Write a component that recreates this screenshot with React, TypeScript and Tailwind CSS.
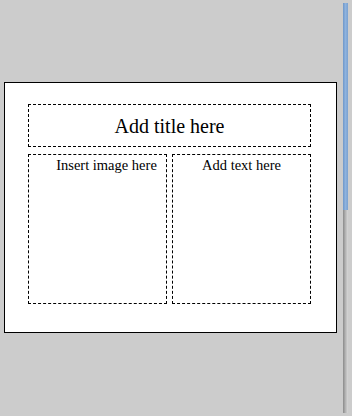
import React from 'react';

const serif = { fontFamily: '"Liberation Serif", "Times New Roman", serif' };

function Placeholder({ label, className }: { label: string; className: string }) {
  return (
    <div className={`border border-dashed border-black ${className}`}>
      <span>{label}</span>
    </div>
  );
}

export default function App() {
  return (
    <div className="flex h-[416px] w-[352px] overflow-hidden bg-[#cccccc]" style={serif}>
      <div className="w-[343px] shrink-0 pl-[4px] pt-[82px]">
        <div className="flex h-[251px] w-[333px] flex-col border border-black bg-white pl-[23px] pt-[21px]">
          <Placeholder
            label="Add title here"
            className="flex h-[43px] w-[283px] items-center justify-center text-[20px] leading-none text-black"
          />
          <div className="mt-[7px] flex gap-[5px]">
            <Placeholder
              label="Insert image here"
              className="h-[150px] w-[139px] pl-[18px] pt-[1px] text-center text-[14.5px] leading-[18px] text-black"
            />
            <Placeholder
              label="Add text here"
              className="h-[150px] w-[139px] pt-[1px] text-center text-[14.5px] leading-[18px] text-black"
            />
          </div>
        </div>
      </div>
      <div className="flex w-[5px] shrink-0 flex-col pb-[3px] pt-[3px]">
        <div className="h-[207px] bg-gradient-to-r from-[#6f97c8] via-[#8fb3de] to-[#7aa1d0]" />
        <div className="flex-1 bg-gradient-to-r from-[#8a8a8a] via-[#b4b4b4] to-[#d8d8d8]" />
      </div>
    </div>
  );
}
